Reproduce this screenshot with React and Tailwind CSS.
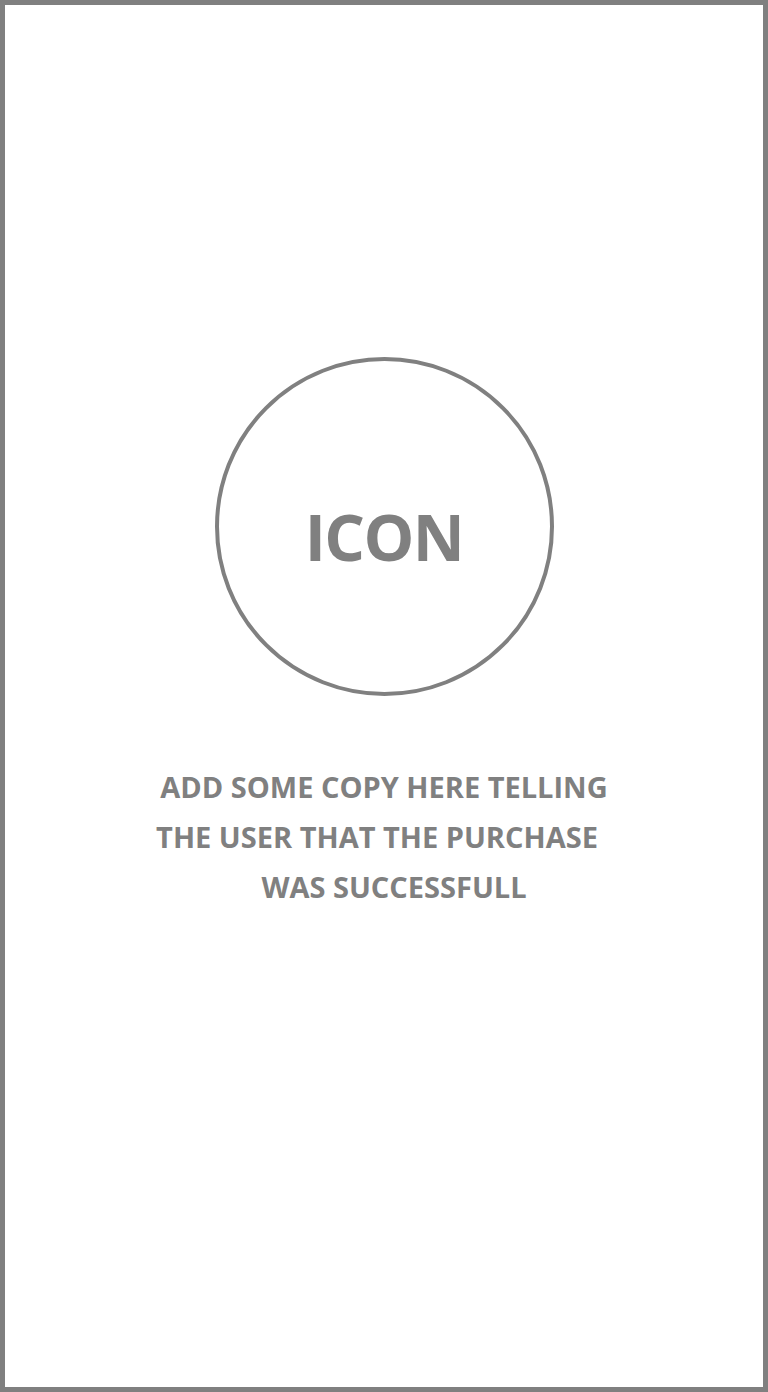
export default function App() {
    return (
        <div className="w-[768px] h-[1392px] bg-white border-[5px] border-[#808080] flex flex-col items-center pt-[352px] text-[#808080]" style={{ fontFamily: '"Open Sans", sans-serif' }}>
            <div className="w-[339px] h-[339px] rounded-full border-4 border-[#808080] flex items-center justify-center">
                <span className="mt-[20px] text-[64px] font-bold leading-none tracking-tight">ICON</span>
            </div>
            <p className="mt-[66px] text-[29px] font-bold leading-[50px] text-center">
                <span className="block">ADD SOME COPY HERE TELLING</span>
                <span className="block pr-[14px]">THE USER THAT THE PURCHASE</span>
                <span className="block pl-[20px]">WAS SUCCESSFULL</span>
            </p>
        </div>
    )
}
